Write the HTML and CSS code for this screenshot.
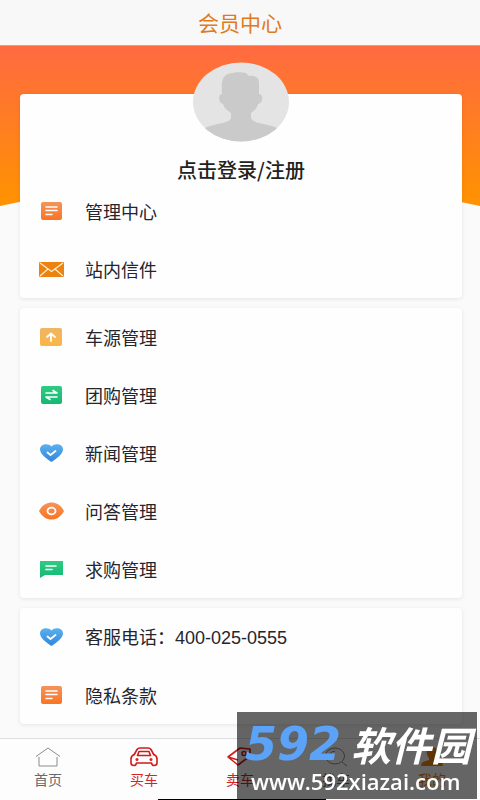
FILE: index.html
```html
<!DOCTYPE html>
<html lang="zh-CN">
<head>
<meta charset="utf-8">
<meta name="viewport" content="width=device-width, initial-scale=1">
<title>会员中心</title>
<link rel="stylesheet" href="styles.css">
</head>
<body>
<svg class="defs" aria-hidden="true">
  <defs>
    <linearGradient id="orange" x1="0" y1="0" x2="0" y2="1"><stop offset="0" stop-color="#f3945c"/><stop offset="1" stop-color="#fb7420"/></linearGradient>
    <linearGradient id="amber" x1="0" y1="0" x2="0" y2="1"><stop offset="0" stop-color="#f0b565"/><stop offset="1" stop-color="#fab645"/></linearGradient>
    <linearGradient id="green" x1="0" y1="0" x2="0" y2="1"><stop offset="0" stop-color="#2fcb83"/><stop offset="1" stop-color="#14b873"/></linearGradient>
    <linearGradient id="blue" x1="0" y1="0" x2="0" y2="1"><stop offset="0" stop-color="#5bb1ee"/><stop offset="1" stop-color="#2f86dc"/></linearGradient>
    <symbol id="note" viewBox="0 0 26 20"><rect x="2" y="1" width="21" height="18" rx="2" fill="url(#orange)"/><path d="M7 6h11M7 9.5h11M7 13.500h6" stroke="#fff" stroke-width="1.500" stroke-linecap="round"/></symbol>
    <symbol id="heart" viewBox="0 0 26 20"><path d="M12.500 19C9 16.500 1 11.500 1 6.500C1 1 9 -.5 12.500 3.500C16 -.5 24 1 24 6.500C24 11.500 16 16.500 12.500 19Z" fill="url(#blue)"/><path d="M8.500 9.500l3 2.500l5-4" fill="none" stroke="#fff" stroke-width="1.800" stroke-linecap="round" stroke-linejoin="round"/></symbol>
  </defs>
</svg>
<header class="titlebar"><h1>会员中心</h1></header>
<div class="hero"></div>
<main class="cards">
  <section class="card">
    <a class="profile" href="#login">
      <svg class="avatar" viewBox="0 0 96 80" aria-hidden="true">
        <defs><clipPath id="face"><ellipse cx="48" cy="40" rx="48" ry="39.500"/></clipPath></defs>
        <ellipse cx="48" cy="40" rx="48" ry="39.500" fill="#e4e4e4"/>
        <path clip-path="url(#face)" d="M29 32C28 18 30 14 35 12C41 10 49 10 53 11L56 14C63 13 66 16 66 22V32C71 32 70 41 65 42C64 47 61 48 58 51V56C60 62 74 61 84 66L92 80H4L12 66C22 61 36 62 38 56V51C34 48 31 46 30 42C25 41 25 32 29 32Z" fill="#cacaca"/>
      </svg>
      <span class="login">点击登录/注册</span>
    </a>
    <a class="row" href="#manage"><svg class="icon" aria-hidden="true"><use href="#note"/></svg>管理中心</a>
    <a class="row" href="#mail"><svg class="icon" viewBox="0 0 26 20" aria-hidden="true"><rect x="0" y="3" width="25" height="15" rx="1" fill="#ee820f"/><path d="M1 4l11.500 8.500L24 4M1 17l8-7M24 17l-8-7" fill="none" stroke="#fff0d9" stroke-width="1.200"/></svg>站内信件</a>
  </section>
  <section class="card">
    <a class="row" href="#cars"><svg class="icon" viewBox="0 0 26 20" aria-hidden="true"><rect x="1" y="1" width="22" height="18" rx="2" fill="url(#amber)"/><path d="M12 14V7M8 10l4-3.500l4 3.500" fill="none" stroke="#fff" stroke-width="1.800" stroke-linecap="round" stroke-linejoin="round"/></svg>车源管理</a>
    <a class="row" href="#group"><svg class="icon" viewBox="0 0 26 20" aria-hidden="true"><rect x="2" y="1" width="21" height="18" rx="2" fill="url(#green)"/><path d="M7 8h11l-4-2.500M18 12H7l4 2.500" fill="none" stroke="#fff" stroke-width="1.600" stroke-linecap="round" stroke-linejoin="round"/></svg>团购管理</a>
    <a class="row" href="#news"><svg class="icon" aria-hidden="true"><use href="#heart"/></svg>新闻管理</a>
    <a class="row" href="#qa"><svg class="icon" viewBox="0 0 26 20" aria-hidden="true"><path d="M0 10C3 4 8 1.500 12.500 1.500S22 4 25 10C22 16 17 18.500 12.500 18.500S3 16 0 10Z" fill="url(#orange)"/><ellipse cx="12.500" cy="10" rx="4" ry="3.300" fill="none" stroke="#fff" stroke-width="1.800"/></svg>问答管理</a>
    <a class="row" href="#wanted"><svg class="icon" viewBox="0 0 26 20" aria-hidden="true"><path d="M1 2h23v14H6l-5 3Z" fill="url(#green)"/><path d="M7 7h10M7 10.500h6" stroke="#fff" stroke-width="1.500" stroke-linecap="round"/></svg>求购管理</a>
  </section>
  <section class="card">
    <a class="row" href="tel:4000250555"><svg class="icon" aria-hidden="true"><use href="#heart"/></svg><span>客服电话：<span class="phone">400-025-0555</span></span></a>
    <a class="row" href="#privacy"><svg class="icon" aria-hidden="true"><use href="#note"/></svg>隐私条款</a>
  </section>
</main>
<nav class="tabs">
  <a class="tab" href="#home"><svg viewBox="0 0 28 22" aria-hidden="true"><path d="M2 10.500L14 2l12 8.500M5 11v9h18v-9"/></svg>首页</a>
  <a class="tab red" href="#buy"><svg viewBox="0 0 28 22" aria-hidden="true"><path class="car" d="M4 9L7 3.500Q8 2 10 2h8q2 0 3 1.500L24 9M4 8.500Q1 10 1 13v4q0 2.500 3 2.500q2 0 2.500-2.500h15q.5 2.500 2.500 2.500q3 0 3-2.500v-4q0-3-3-4.500M9 5.500h10l1.500 4h-13Z"/><circle class="fill" cx="7" cy="13.500" r="1.500"/><circle class="fill" cx="21" cy="13.500" r="1.500"/></svg>买车</a>
  <a class="tab red" href="#sell"><svg viewBox="0 0 28 22" aria-hidden="true"><path class="car" d="M2 11L14 2l10 1v7L12 19ZM2 11l10 3"/><circle class="car" cx="18" cy="7.500" r="2"/></svg>卖车</a>
  <a class="tab" href="#find"><svg viewBox="0 0 28 22" aria-hidden="true"><ellipse cx="13" cy="10" rx="9.500" ry="8"/><path d="M20 16l5 4M7 11q0-5 6-6"/></svg>找车</a>
  <a class="tab orange" href="#me" aria-current="page"><svg viewBox="0 0 28 22" aria-hidden="true"><path class="fill" d="M14 1C21 1 20 9 17 12v2l6 2q2 1 2 4H3q0-3 2-4l6-2v-2C8 9 7 1 14 1Z"/></svg>我的</a>
</nav>
<div class="indicator"></div>
<aside class="mark">
  <div class="mark-name"><span class="mark-num">592</span><span>软件园</span></div>
  <div class="mark-url">www.592xiazai.com</div>
</aside>
</body>
</html>
```
FILE: styles.css
```css
* { box-sizing: border-box; }
body {
  margin: 0;
  min-height: 100vh;
  background: #fafafa;
  color: #25252d;
  font-family: "Noto Sans CJK SC", sans-serif;
}
a { color: inherit; text-decoration: none; }
.defs { position: absolute; width: 0; height: 0; }
.titlebar {
  height: 46px;
  display: flex;
  align-items: center;
  justify-content: center;
  padding-bottom: 2px;
  background: #f8f8f8;
  border-bottom: 1px solid #c9a79b;
}
.titlebar h1 { margin: 0; font-size: 21px; line-height: 30px; font-weight: 400; color: #e07b1d; }
.hero {
  height: 160px;
  background: linear-gradient(#ff6a41, #ff9300);
  clip-path: polygon(0 0, 100% 0, 100% 100%, 92% 95%, 8% 95%, 0 100%);
}
.cards {
  position: relative;
  display: flex;
  flex-direction: column;
  gap: 10px;
  margin-top: -112px;
  padding: 0 18px 76px 20px;
}
.card { background: #fefefe; border-radius: 4px; box-shadow: 0 1px 4px rgba(0, 0, 0, .09); }
.profile { display: flex; flex-direction: column; align-items: center; height: 88px; }
.avatar { width: 96px; height: 80px; margin-top: -32px; flex: none; }
.login { margin-top: 14px; font-size: 20px; line-height: 28px; font-weight: 500; color: #222; }
.row { display: flex; align-items: center; gap: 20px; height: 58px; padding-left: 19px; font-size: 18px; line-height: 28px; font-weight: 400; }
.phone { font-family: "Liberation Sans", sans-serif; }
.icon { width: 26px; height: 20px; flex: none; }
.tabs {
  position: fixed;
  left: 0;
  right: 0;
  bottom: 0;
  height: 62px;
  display: flex;
  background: #fdfdfd;
  border-top: 1px solid #dcdee2;
}
.tab { flex: 1; display: flex; flex-direction: column; align-items: center; padding-top: 7px; font-size: 14px; line-height: 22px; color: #66686c; }
.tab svg { width: 28px; height: 22px; fill: none; stroke: #888b90; stroke-width: 1; }
.tab .car { stroke: #d31919; stroke-width: 1.6; stroke-linejoin: round; }
.tab .fill { fill: currentColor; stroke: none; }
.red { color: #d92323; }
.orange { color: #ee820f; }
.indicator { position: fixed; left: 33%; right: 32%; bottom: 0; height: 1px; background: #000; }
.mark {
  position: fixed;
  right: 3px;
  bottom: 1px;
  width: 240px;
  height: 87px;
  padding: 8px 6px 0 8px;
  background: rgba(0, 0, 0, .6);
  color: #fff;
  font-weight: 700;
}
.mark-name { display: flex; align-items: center; justify-content: space-between; height: 48px; font-size: 40px; line-height: 48px; font-style: italic; }
.mark-num { font-family: "DejaVu Sans", sans-serif; font-size: 46px; color: #5ba2f9; }
.mark-url { padding-left: 6px; font-family: "Open Sans", sans-serif; font-size: 22px; line-height: 26px; font-weight: 600; }
```
